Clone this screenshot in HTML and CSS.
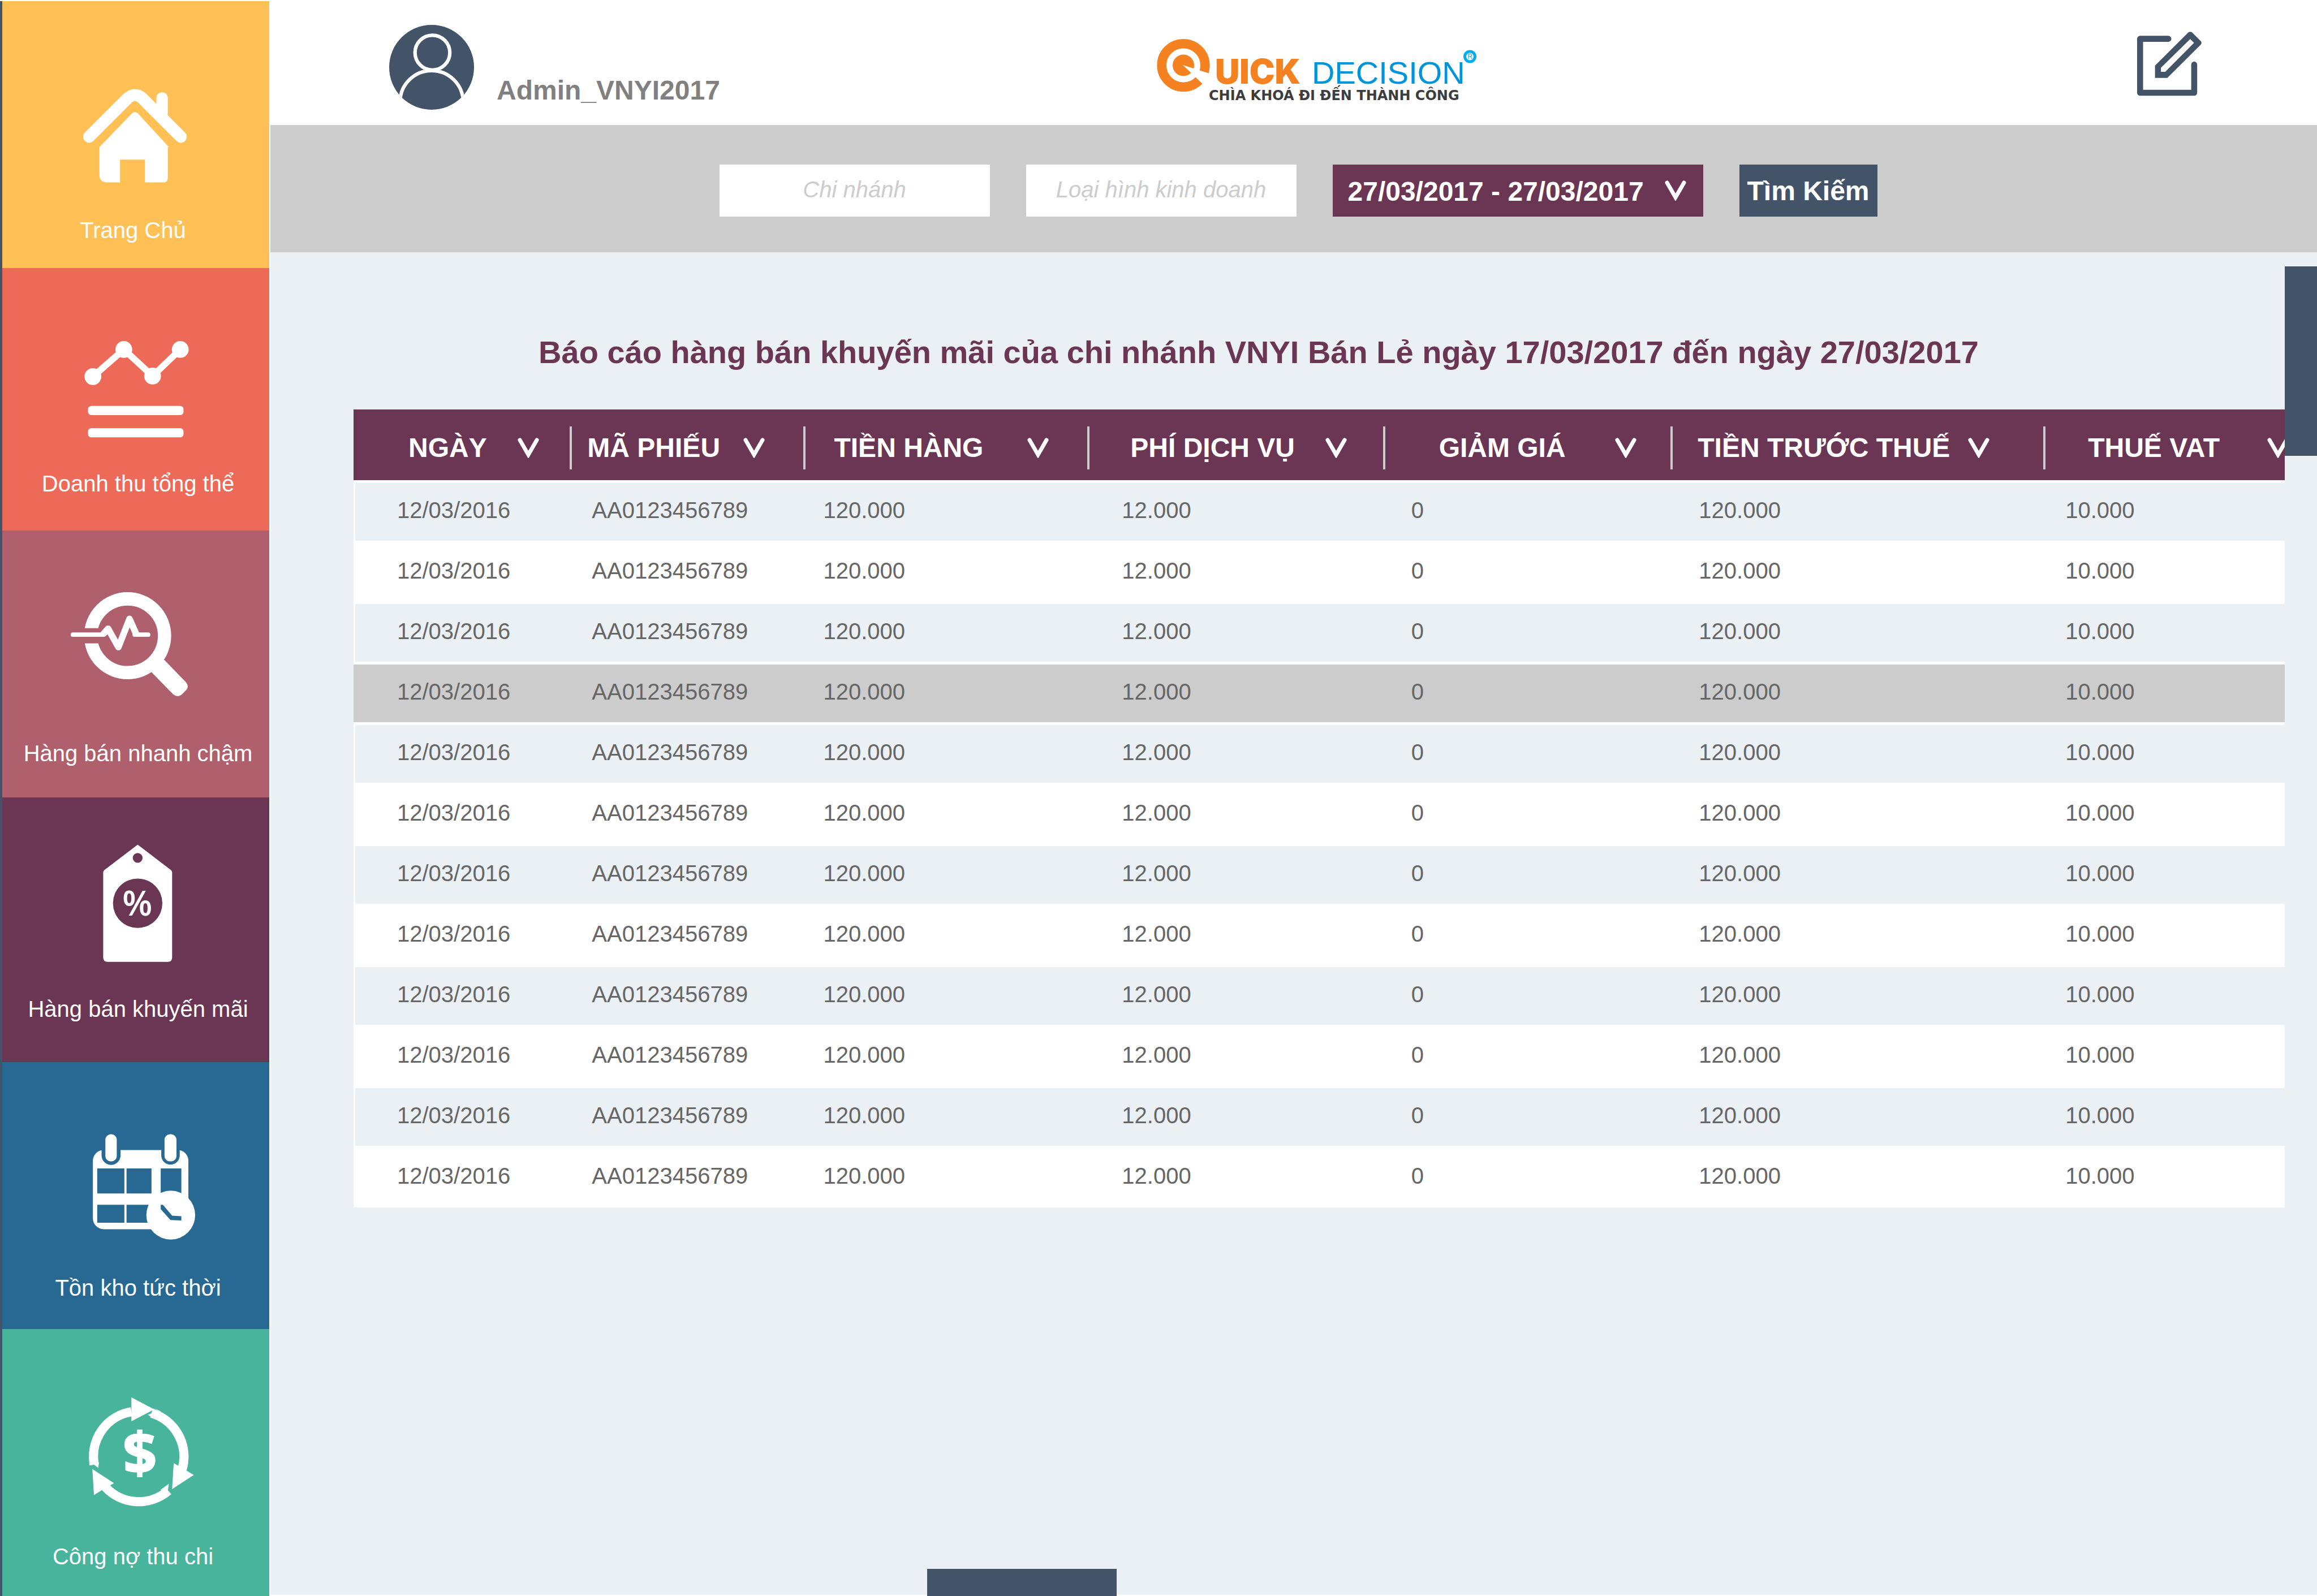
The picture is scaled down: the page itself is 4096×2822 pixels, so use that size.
FILE: index.html
```html
<!DOCTYPE html>
<html lang="vi">
<head>
<meta charset="utf-8">
<title>Quick Decision</title>
<link rel="stylesheet" href="styles.css">
</head>
<body>
<nav class="sidebar">
  <a class="tile tile-home" href="#">
    <svg class="tile-icon" viewBox="0 0 492 397" aria-hidden="true">
      <path class="line" stroke-width="22" d="M160 250L230 180Q244.500 166 259 180L329 250"/>
      <rect x="284" y="168" width="21" height="50" rx="10"/>
      <path d="M179 269L239 207Q244.500 202 250 207L307 269H305V326Q305 334 297 334H263V292H217V334H193Q179 334 179 320Z"/>
    </svg>
    <span class="tile-label">Trang Chủ</span>
  </a>
  <a class="tile tile-revenue" href="#">
    <svg class="tile-icon" viewBox="0 0 492 372" aria-hidden="true">
      <path class="line" stroke-width="12" d="M167 200L224 150L277 199L328 150"/>
      <circle cx="167" cy="200" r="15.500"/><circle cx="224" cy="150" r="15.500"/>
      <circle cx="277" cy="199" r="15.500"/><circle cx="328" cy="150" r="15.500"/>
      <rect x="158" y="254" width="176" height="17" rx="6"/>
      <rect x="158" y="295" width="176" height="17" rx="6"/>
    </svg>
    <span class="tile-label">Doanh thu tổng thể</span>
  </a>
  <a class="tile tile-speed" href="#">
    <svg class="tile-icon" viewBox="0 0 492 386" aria-hidden="true">
      <circle class="line" stroke-width="24.500" cx="231" cy="194" r="68"/>
      <path d="M298 238L338 279Q346 288 337 296L331 302Q324 309 315 302L275 261Z"/>
      <rect class="cut" x="140" y="180" width="37" height="28"/>
      <path class="line" stroke-width="8" d="M130 192H186M244 192H269"/>
      <path class="line" stroke-width="12" d="M187 190L195 181L214 215L234.500 163L246 189"/>
    </svg>
    <span class="tile-label">Hàng bán nhanh chậm</span>
  </a>
  <a class="tile tile-promo" href="#">
    <svg class="tile-icon" viewBox="0 0 492 365" aria-hidden="true">
      <path d="M249.500 87L311 134Q313 136 313 139V295Q313 303 305 303H194Q186 303 186 295V139Q186 136 188 134Z"/>
      <circle class="cut" cx="249.500" cy="111.500" r="9"/>
      <circle class="cut" cx="249.500" cy="195" r="45.500"/>
      <text class="percent" x="249" y="218">%</text>
    </svg>
    <span class="tile-label">Hàng bán khuyến mãi</span>
  </a>
  <a class="tile tile-stock" href="#">
    <svg class="tile-icon" viewBox="0 0 492 391" aria-hidden="true">
      <rect x="167" y="162" width="176" height="146" rx="20"/>
      <path class="cut" d="M183 155V172A17 17 0 0 0 218 172V155ZM293 155V172A17 17 0 0 0 327 172V155Z"/>
      <rect x="190" y="133" width="21" height="50" rx="10"/>
      <rect x="299" y="133" width="22" height="50" rx="10"/>
      <path class="cut" d="M175 196H225V242H175ZM229 196H275V242H229ZM292 196H330V242H292ZM175 263H225V296H175ZM229 263H275V296H229Z"/>
      <circle cx="310.500" cy="282" r="45"/>
      <path class="cut" d="M292 263H296L313 283L330 284V292L310 291L292 271Z"/>
    </svg>
    <span class="tile-label">Tồn kho tức thời</span>
  </a>
  <a class="tile tile-debt" href="#">
    <svg class="tile-icon" viewBox="0 0 492 394" aria-hidden="true">
      <path class="arc" d="M169.500 250A83.500 83.500 0 0 1 238 152.500M275 155A83.500 83.500 0 0 1 331 260M306 298A83.500 83.500 0 0 1 190 291"/>
      <path d="M238 126L280 148L238 170Z"/>
      <path d="M316 247L353 269L313 295Z"/>
      <path d="M166 258L206 284L197 289L182 298L169 306Z"/>
      <path d="M281 146L288 151L268 158L276 163L292 152Z"/>
      <path d="M307 285L304 306L311 304L300 310L292 296Z"/>
      <path d="M160 251L161 244L177 256L178 246L165 240Z"/>
      <text class="dollar" x="253.500" y="267">$</text>
    </svg>
    <span class="tile-label">Công nợ thu chi</span>
  </a>
</nav>

<div class="page">
  <header class="topbar">
    <div class="user">
      <svg class="avatar" viewBox="0 0 156 156" aria-hidden="true">
        <clipPath id="face"><circle cx="78" cy="78" r="78"/></clipPath>
        <g clip-path="url(#face)">
          <rect width="156" height="156" fill="#435368"/>
          <circle class="ring" cx="79.500" cy="51" r="32"/>
          <circle class="ring" cx="78" cy="142" r="58"/>
        </g>
      </svg>
      <span class="user-name">Admin_VNYI2017</span>
    </div>
    <svg class="logo" viewBox="0 0 576 118" role="img" aria-label="Quick Decision">
      <circle cx="47" cy="47.500" r="38.300" fill="none" stroke="#f58220" stroke-width="16.600"/>
      <circle cx="47" cy="47.500" r="19" fill="#f58220"/>
      <path d="M46 47L106 66L92 91Z" fill="#fff"/>
      <text class="logo-quick" x="103" y="80">UICK</text>
      <text class="logo-decision" x="274" y="80">DECISION</text>
      <circle cx="553.500" cy="32" r="9" fill="none" stroke="#00aeef" stroke-width="5"/>
      <text class="logo-mark" x="553.500" y="36">R</text>
      <text class="logo-tagline" x="92" y="109">CHÌA KHOÁ ĐI ĐẾN THÀNH CÔNG</text>
    </svg>
    <button class="edit" type="button" aria-label="Edit">
      <svg viewBox="258 176 357 357" aria-hidden="true">
        <path d="M431 215.500H274.500V514.500H574V358" fill="none" stroke="#435368" stroke-width="33" stroke-linecap="round" stroke-linejoin="round"/>
        <path fill="#435368" fill-rule="evenodd" d="M357 364L541 181Q552 172 563 181L610 228Q619 238 610 248L425 432H357ZM390 376V398H414L573 238L552 217Z"/>
      </svg>
    </button>
  </header>

  <form class="filters">
    <input class="field" type="text" placeholder="Chi nhánh" aria-label="Chi nhánh">
    <input class="field" type="text" placeholder="Loại hình kinh doanh" aria-label="Loại hình kinh doanh">
    <div class="range">
      <select aria-label="27/03/2017 - 27/03/2017"><option>27/03/2017 - 27/03/2017</option></select>
      <svg class="chevron" viewBox="0 0 38 36" aria-hidden="true"><path d="M4 4L19 30L34 4"/></svg>
    </div>
    <button class="search" type="button">Tìm Kiếm</button>
  </form>

  <main class="report">
    <h1>Báo cáo hàng bán khuyến mãi của chi nhánh VNYI Bán Lẻ ngày 17/03/2017 đến ngày 27/03/2017</h1>
    <table>
      <colgroup>
        <col class="w-date"><col class="w-code"><col class="w-goods"><col class="w-fee"><col class="w-discount"><col class="w-pretax"><col class="w-vat">
      </colgroup>
      <thead>
        <tr>
          <th class="c-date"><div class="head">NGÀY<svg class="chevron" viewBox="0 0 38 36" aria-hidden="true"><path d="M4 4L19 30L34 4"/></svg></div></th>
          <th class="c-code"><div class="head">MÃ PHIẾU<svg class="chevron" viewBox="0 0 38 36" aria-hidden="true"><path d="M4 4L19 30L34 4"/></svg></div></th>
          <th class="c-goods"><div class="head">TIỀN HÀNG<svg class="chevron" viewBox="0 0 38 36" aria-hidden="true"><path d="M4 4L19 30L34 4"/></svg></div></th>
          <th class="c-fee"><div class="head">PHÍ DỊCH VỤ<svg class="chevron" viewBox="0 0 38 36" aria-hidden="true"><path d="M4 4L19 30L34 4"/></svg></div></th>
          <th class="c-discount"><div class="head">GIẢM GIÁ<svg class="chevron" viewBox="0 0 38 36" aria-hidden="true"><path d="M4 4L19 30L34 4"/></svg></div></th>
          <th class="c-pretax"><div class="head">TIỀN TRƯỚC THUẾ<svg class="chevron" viewBox="0 0 38 36" aria-hidden="true"><path d="M4 4L19 30L34 4"/></svg></div></th>
          <th class="c-vat"><div class="head">THUẾ VAT<svg class="chevron" viewBox="0 0 38 36" aria-hidden="true"><path d="M4 4L19 30L34 4"/></svg></div></th>
        </tr>
      </thead>
      <tbody>
        <tr><td class="c-date">12/03/2016</td><td class="c-code">AA0123456789</td><td class="c-goods">120.000</td><td class="c-fee">12.000</td><td class="c-discount">0</td><td class="c-pretax">120.000</td><td class="c-vat">10.000</td></tr>
        <tr><td class="c-date">12/03/2016</td><td class="c-code">AA0123456789</td><td class="c-goods">120.000</td><td class="c-fee">12.000</td><td class="c-discount">0</td><td class="c-pretax">120.000</td><td class="c-vat">10.000</td></tr>
        <tr><td class="c-date">12/03/2016</td><td class="c-code">AA0123456789</td><td class="c-goods">120.000</td><td class="c-fee">12.000</td><td class="c-discount">0</td><td class="c-pretax">120.000</td><td class="c-vat">10.000</td></tr>
        <tr class="selected"><td class="c-date">12/03/2016</td><td class="c-code">AA0123456789</td><td class="c-goods">120.000</td><td class="c-fee">12.000</td><td class="c-discount">0</td><td class="c-pretax">120.000</td><td class="c-vat">10.000</td></tr>
        <tr><td class="c-date">12/03/2016</td><td class="c-code">AA0123456789</td><td class="c-goods">120.000</td><td class="c-fee">12.000</td><td class="c-discount">0</td><td class="c-pretax">120.000</td><td class="c-vat">10.000</td></tr>
        <tr><td class="c-date">12/03/2016</td><td class="c-code">AA0123456789</td><td class="c-goods">120.000</td><td class="c-fee">12.000</td><td class="c-discount">0</td><td class="c-pretax">120.000</td><td class="c-vat">10.000</td></tr>
        <tr><td class="c-date">12/03/2016</td><td class="c-code">AA0123456789</td><td class="c-goods">120.000</td><td class="c-fee">12.000</td><td class="c-discount">0</td><td class="c-pretax">120.000</td><td class="c-vat">10.000</td></tr>
        <tr><td class="c-date">12/03/2016</td><td class="c-code">AA0123456789</td><td class="c-goods">120.000</td><td class="c-fee">12.000</td><td class="c-discount">0</td><td class="c-pretax">120.000</td><td class="c-vat">10.000</td></tr>
        <tr><td class="c-date">12/03/2016</td><td class="c-code">AA0123456789</td><td class="c-goods">120.000</td><td class="c-fee">12.000</td><td class="c-discount">0</td><td class="c-pretax">120.000</td><td class="c-vat">10.000</td></tr>
        <tr><td class="c-date">12/03/2016</td><td class="c-code">AA0123456789</td><td class="c-goods">120.000</td><td class="c-fee">12.000</td><td class="c-discount">0</td><td class="c-pretax">120.000</td><td class="c-vat">10.000</td></tr>
        <tr><td class="c-date">12/03/2016</td><td class="c-code">AA0123456789</td><td class="c-goods">120.000</td><td class="c-fee">12.000</td><td class="c-discount">0</td><td class="c-pretax">120.000</td><td class="c-vat">10.000</td></tr>
        <tr><td class="c-date">12/03/2016</td><td class="c-code">AA0123456789</td><td class="c-goods">120.000</td><td class="c-fee">12.000</td><td class="c-discount">0</td><td class="c-pretax">120.000</td><td class="c-vat">10.000</td></tr>
      </tbody>
    </table>
    <div class="thumb thumb-y"></div>
    <div class="thumb thumb-x"></div>
  </main>
</div>
</body>
</html>
```
FILE: styles.css
```css
* { box-sizing: border-box; }

body {
  margin: 0;
  min-height: 100vh;
  display: flex;
  background: #fff;
  font-family: "Liberation Sans", Arial, sans-serif;
  font-size: 40px;
}

/* Sidebar */
.sidebar {
  flex: none;
  width: 478px;
  display: grid;
  grid-template-rows: 118fr 116fr 118fr 117fr 118fr 118fr;
  border-top: 2px solid #fff;
  border-right: 2px solid #fff;
}
.tile {
  display: flex;
  flex-direction: column;
  background: var(--tile);
  border-left: 4px solid #435368;
  color: #fff;
  text-decoration: none;
  text-align: center;
}
.tile-home { --tile: #ffc155; }
.tile-revenue { --tile: #ed6a58; }
.tile-speed { --tile: #b05f6d; }
.tile-promo { --tile: #6a3654; }
.tile-stock { --tile: #286993; }
.tile-debt { --tile: #48b49c; }
.tile-icon { display: block; width: 100%; fill: #fff; }
.tile-icon .line { fill: none; stroke: #fff; stroke-linecap: round; stroke-linejoin: round; }
.tile-icon .arc { fill: none; stroke: #fff; stroke-width: 17; }
.tile-icon .cut { fill: var(--tile); }
.percent { font: 600 64px "Open Sans", sans-serif; text-anchor: middle; }
.dollar { font: 800 108px "Open Sans", sans-serif; text-anchor: middle; }
.tile-label { line-height: 48px; padding-left: 8px; }
.tile-home .tile-label,
.tile-debt .tile-label { padding: 0 10px 0 0; }

/* Page */
.page { flex: 1; min-width: 0; display: flex; flex-direction: column; }

.topbar {
  display: grid;
  grid-template-columns: 1357fr 1733fr auto;
  align-items: start;
  padding: 44px 204px 27px 210px;
}
.user { display: flex; align-items: flex-end; gap: 40px; }
.avatar { width: 150px; height: 150px; }
.avatar .ring { fill: none; stroke: #fff; stroke-width: 6.5; }
.user-name {
  padding-bottom: 6px;
  font-size: 48px;
  font-weight: bold;
  line-height: 56px;
  color: #808080;
}
.logo { width: 576px; height: 118px; margin-top: 24px; }
.logo-quick { font: 900 60px Inter, sans-serif; fill: #f58220; }
.logo-decision { font-size: 56px; fill: #0095da; }
.logo-mark { font-size: 12px; fill: #00aeef; text-anchor: middle; }
.logo-tagline { font: bold 24px "DejaVu Sans", sans-serif; fill: #3d3d3f; }
.edit {
  width: 114px;
  height: 114px;
  margin-top: 12px;
  padding: 0;
  border: 0;
  background: none;
}
.edit svg { display: block; width: 100%; height: 100%; }

.filters {
  display: flex;
  justify-content: center;
  gap: 64px;
  padding: 70px 0 63px 16px;
  background: #ccc;
}
.field {
  width: 478px;
  height: 92px;
  padding: 0 0 4px;
  border: 0;
  border-radius: 0;
  background: #fff;
  font: inherit;
  font-style: italic;
  text-align: center;
  color: #666;
}
.field::placeholder { color: #ccc; opacity: 1; }
.range { display: grid; width: 655px; align-items: center; }
.range > * { grid-area: 1 / 1; }
.range select {
  width: 100%;
  height: 92px;
  padding: 2px 0 0 27px;
  border: 0;
  border-radius: 0;
  appearance: none;
  background: #6a3654;
  color: #fff;
  font: bold 48px "Liberation Sans", Arial, sans-serif;
}
.range .chevron { justify-self: end; margin-right: 30px; pointer-events: none; }
.search {
  width: 244px;
  height: 92px;
  padding: 0;
  border: 0;
  background: #435368;
  color: #fff;
  font: bold 48px "Liberation Sans", Arial, sans-serif;
}
.chevron { display: block; flex: none; width: 38px; height: 36px; }
.chevron path { fill: none; stroke: #fff; stroke-width: 7; stroke-linecap: round; }

/* Report */
.report {
  flex: 1;
  position: relative;
  padding: 145px 57px 0 147px;
  background: #ebf0f4;
  border-bottom: 2px solid #fff;
}
h1 {
  margin: 0 67px 69px -147px;
  font-size: 56px;
  line-height: 64px;
  text-align: center;
  color: #6a3654;
}
table { width: 100%; table-layout: fixed; border-collapse: separate; border-spacing: 0; }
.w-date { width: 11.2%; }
.w-code { width: 12.1%; }
.w-goods { width: 14.7%; }
.w-fee { width: 15.3%; }
.w-discount { width: 14.9%; }
.w-pretax { width: 19.3%; }

th {
  height: 127px;
  padding: 0;
  overflow: hidden;
  background: #6a3654;
  border-bottom: 2px solid #fff;
  color: #fff;
  font-size: 48px;
  text-align: left;
  white-space: nowrap;
}
.head {
  display: flex;
  align-items: center;
  justify-content: space-between;
  height: 76px;
  margin-top: 10px;
  border-left: 4px solid #ccc;
}
th.c-date .head { padding: 0 54px 0 93px; border-left-color: transparent; }
th.c-code .head { padding: 0 68px 0 27px; }
th.c-goods .head { padding: 0 68px 0 50px; }
th.c-fee .head { padding: 0 64px 0 72px; }
th.c-discount .head { padding: 0 60px 0 95px; }
th.c-pretax .head { padding: 0 95px 0 44px; }
th.c-vat .head { padding-left: 75px; justify-content: flex-start; gap: 84px; }

td { height: 107px; padding: 0 0 4px; background: #fff; color: #666; }
tbody tr:nth-child(odd) td,
tbody .selected td {
  padding-bottom: 6px;
  background: #ebf0f4;
  border-top: 3px solid #fff;
  border-bottom: 2px solid #fff;
}
tbody .selected td { background: #ccc; }
td.c-date { padding-left: 77px; }
tbody tr:nth-child(odd) td.c-date { padding-left: 74px; border-left: 3px solid #fff; }
td.c-code { padding-left: 39px; }
td.c-goods { padding-left: 35px; }
td.c-fee { padding-left: 61px; }
td.c-discount { padding-left: 50px; }
td.c-pretax { padding-left: 50px; }
td.c-vat { padding-left: 39px; }

/* Scroll thumbs over the report */
.thumb { position: absolute; background: #435368; }
.thumb-y { top: 25px; right: 0; width: 57px; height: 335px; }
.thumb-x { left: 1161px; bottom: -2px; width: 335px; height: 48px; }
```
